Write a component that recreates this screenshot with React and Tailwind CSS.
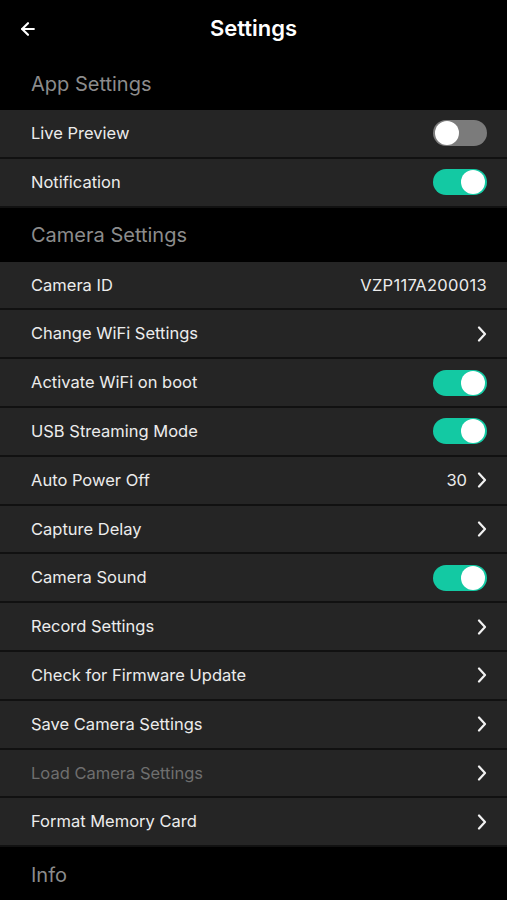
import React from "react";
import { ArrowLeft } from "lucide-react";

const Toggle = ({ on }) => (
  <div
    className={`w-[54px] h-[26px] rounded-full flex items-center px-[2px] ${
      on ? "bg-[#13c9a3] justify-end" : "bg-[#7b7b7b] justify-start"
    }`}
  >
    <div className="w-[24px] h-[24px] rounded-full bg-white" />
  </div>
);

const Chevron = () => (
  <svg width="10" height="16" viewBox="0 0 10 16" fill="none">
    <path d="M2 1.5 8 8l-6 6.5" stroke="#f2f2f2" strokeWidth="2.2" strokeLinecap="round" strokeLinejoin="round" />
  </svg>
);

const Row = ({ label, right, dim }) => (
  <div className="h-[46.8px] bg-[#252525] border-b-2 border-[#111111] box-content flex items-center justify-between pl-[31px] pr-[20px]">
    <span className={`text-[16.5px] ${dim ? "text-[#6f6f6f]" : "text-[#ececec]"}`}>{label}</span>
    <div className="flex items-center gap-[10px]">{right}</div>
  </div>
);

const Section = ({ title, h }) => (
  <div className={`${h} flex items-center pl-[31px] bg-black`}>
    <span className="text-[20px] text-[#8c8c8c]">{title}</span>
  </div>
);

const App = () => {
  const chevron = <Chevron />;
  return (
    <div className="w-[507px] h-[900px] bg-black overflow-hidden" style={{ fontFamily: "Inter, 'Noto Sans', sans-serif" }}>
      {/* Top bar */}
      <div className="h-[57px] flex items-center relative">
        <div className="pl-[18px] text-white">
          <ArrowLeft size={20} strokeWidth={2.6} />
        </div>
        <h1 className="absolute left-0 right-0 text-center text-[22px] font-semibold text-white pointer-events-none">
          Settings
        </h1>
      </div>

      <Section title="App Settings" h="h-[53px]" />
      <Row label="Live Preview" right={<Toggle on={false} />} />
      <Row label="Notification" right={<Toggle on />} />

      <Section title="Camera Settings" h="h-[54px]" />
      <Row label="Camera ID" right={<span className="text-[16.5px] text-[#ececec] tracking-[0.3px]">VZP117A200013</span>} />
      <Row label="Change WiFi Settings" right={chevron} />
      <Row label="Activate WiFi on boot" right={<Toggle on />} />
      <Row label="USB Streaming Mode" right={<Toggle on />} />
      <Row
        label="Auto Power Off"
        right={
          <>
            <span className="text-[16.5px] text-[#ececec]">30</span>
            {chevron}
          </>
        }
      />
      <Row label="Capture Delay" right={chevron} />
      <Row label="Camera Sound" right={<Toggle on />} />
      <Row label="Record Settings" right={chevron} />
      <Row label="Check for Firmware Update" right={chevron} />
      <Row label="Save Camera Settings" right={chevron} />
      <Row label="Load Camera Settings" right={chevron} dim />
      <Row label="Format Memory Card" right={chevron} />

      <Section title="Info" h="h-[56px]" />
    </div>
  );
};

export default App;
